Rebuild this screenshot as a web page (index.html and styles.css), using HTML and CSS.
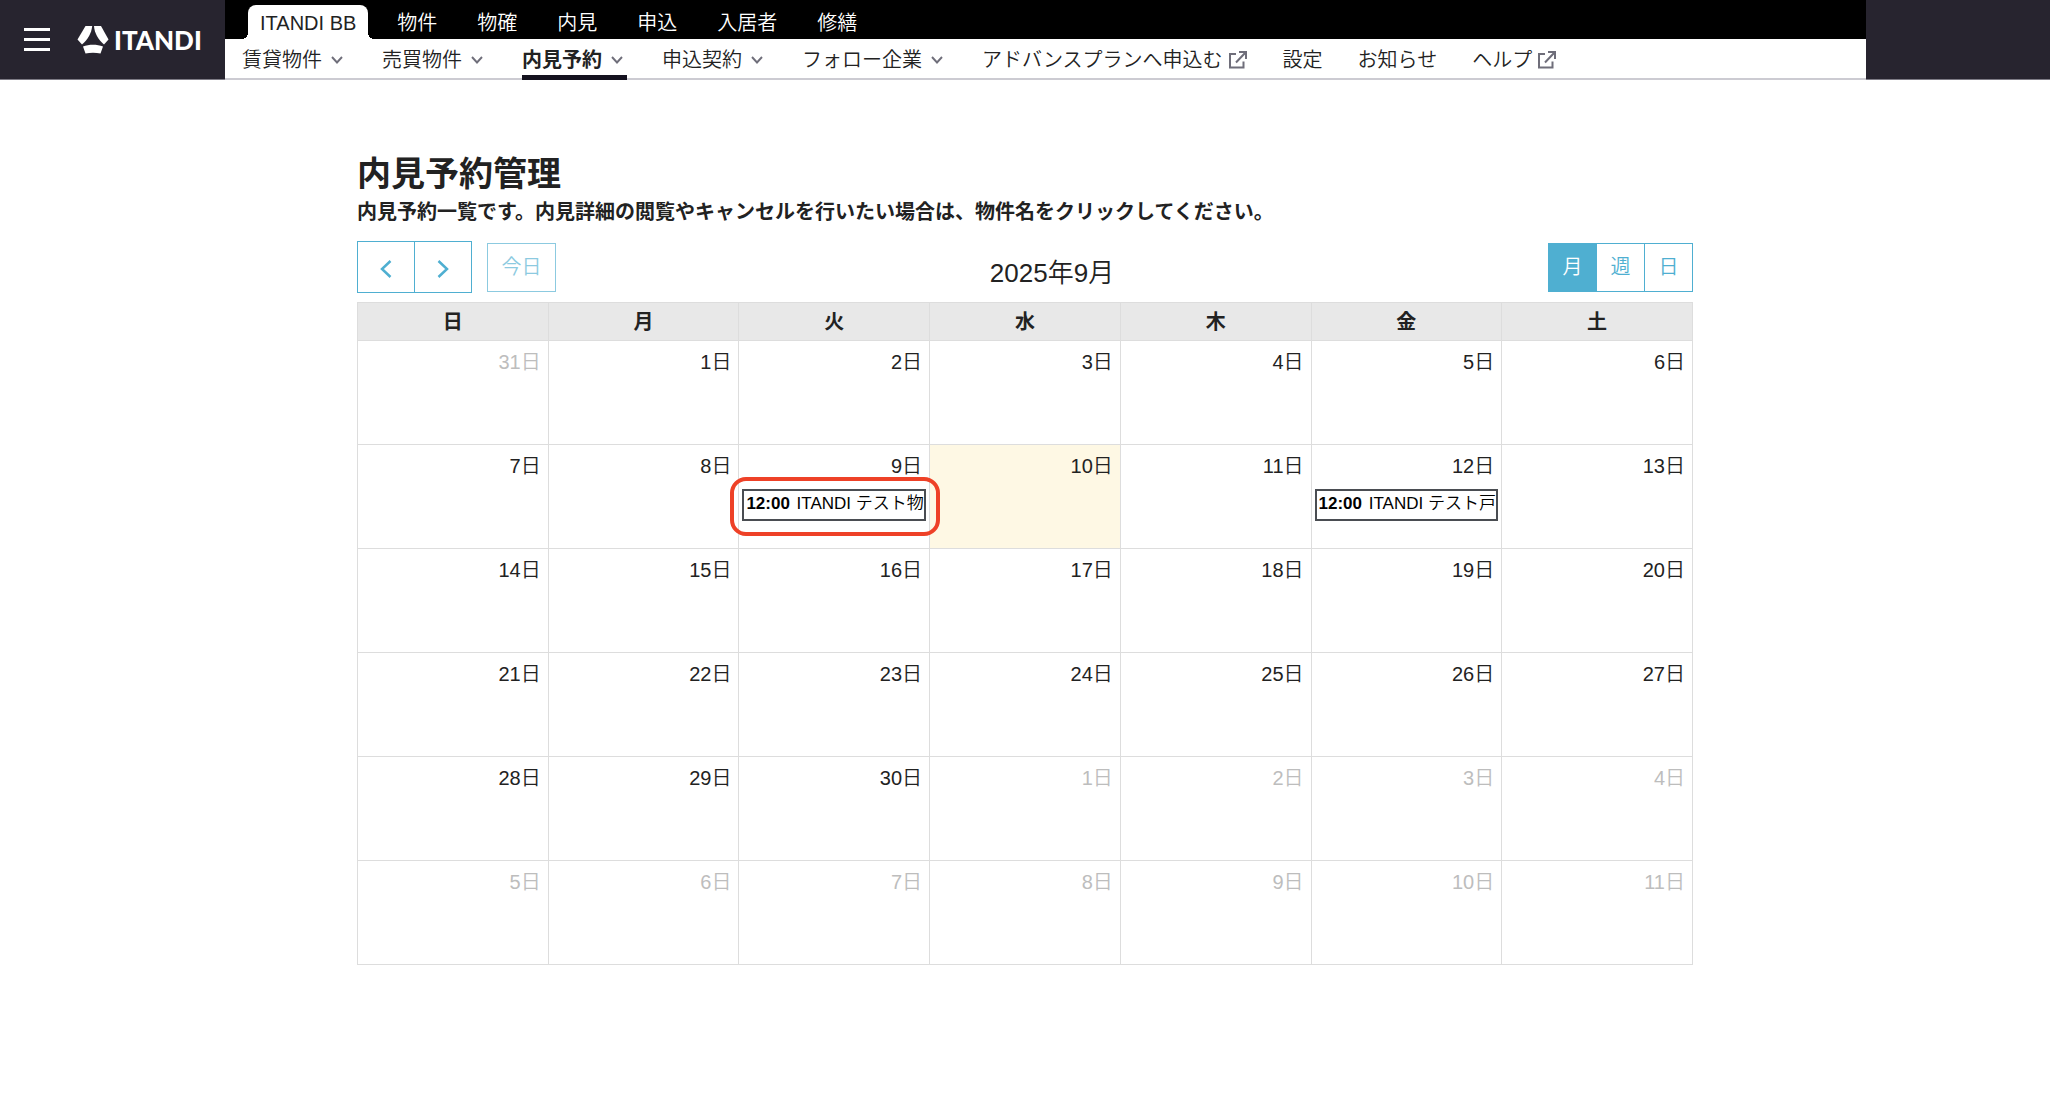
FILE: index.html
```html
<!DOCTYPE html>
<html lang="ja">
<head>
    <meta charset="UTF-8">
    <meta name="viewport" content="width=device-width, initial-scale=1.0">
    <title>内見予約管理 | ITANDI BB</title>
    <link rel="stylesheet" href="styles.css">
</head>
<body>
    <svg class="sprite" aria-hidden="true">
        <symbol id="chevron" viewBox="0 0 14 10">
            <path d="M2 2l5 5.500 5-5.500" fill="none" stroke="currentColor" stroke-width="1.900"/>
        </symbol>
        <symbol id="external" viewBox="0 0 20 20">
            <path d="M8 4H2v13.500h13.500v-6M11 2h7v7M17.500 2.500L8 12.500" fill="none" stroke="currentColor" stroke-width="2"/>
        </symbol>
    </svg>

    <header class="header">
        <div class="brand">
            <button class="menu-btn" type="button" aria-label="メニュー"><span></span><span></span><span></span></button>
            <a class="logo" href="#">
                <svg class="logo-mark" viewBox="0 0 32 28" aria-hidden="true">
                    <path d="M8.500 0H15.200C14.500 7 11 13.500 5 18.500L0.500 13.500z"/>
                    <path d="M17 0h7L31.500 13.500 27 18.500C21 13.500 17.500 7 17 0z"/>
                    <path d="M6 20.500C12 18 20 18 26 20.500L23.500 27.500C19 26.500 13 26.500 8.500 27.500z"/>
                </svg>
                <span>ITANDI</span>
            </a>
        </div>
        <div class="header-main">
            <nav class="service-nav">
                <a class="service-link active" href="#">ITANDI BB</a>
                <a class="service-link" href="#">物件</a>
                <a class="service-link" href="#">物確</a>
                <a class="service-link" href="#">内見</a>
                <a class="service-link" href="#">申込</a>
                <a class="service-link" href="#">入居者</a>
                <a class="service-link" href="#">修繕</a>
            </nav>
            <nav class="sub-nav">
                <a class="sub-link" href="#">賃貸物件<svg class="icon-chevron"><use href="#chevron"/></svg></a>
                <a class="sub-link" href="#">売買物件<svg class="icon-chevron"><use href="#chevron"/></svg></a>
                <a class="sub-link active" href="#">内見予約<svg class="icon-chevron"><use href="#chevron"/></svg></a>
                <a class="sub-link" href="#">申込契約<svg class="icon-chevron"><use href="#chevron"/></svg></a>
                <a class="sub-link" href="#">フォロー企業<svg class="icon-chevron"><use href="#chevron"/></svg></a>
                <a class="sub-link" href="#">アドバンスプランへ申込む<svg class="icon-external"><use href="#external"/></svg></a>
                <a class="sub-link" href="#">設定</a>
                <a class="sub-link" href="#">お知らせ</a>
                <a class="sub-link" href="#">ヘルプ<svg class="icon-external"><use href="#external"/></svg></a>
            </nav>
        </div>
        <div class="header-side"></div>
    </header>

    <main class="container">
        <h1>内見予約管理</h1>
        <p class="lead">内見予約一覧です。内見詳細の閲覧やキャンセルを行いたい場合は、物件名をクリックしてください。</p>

        <div class="toolbar">
            <div class="toolbar-left">
                <div class="btn-group">
                    <button class="btn btn-arrow" type="button" aria-label="前の月"><svg viewBox="0 0 12 20"><path d="M10.500 2L2 10l8.500 8"/></svg></button>
                    <button class="btn btn-arrow" type="button" aria-label="次の月"><svg viewBox="0 0 12 20"><path d="M1.500 2L10 10l-8.500 8"/></svg></button>
                </div>
                <button class="btn btn-today" type="button" disabled>今日</button>
            </div>
            <h2>2025年9月</h2>
            <div class="btn-group">
                <button class="btn active" type="button">月</button>
                <button class="btn" type="button">週</button>
                <button class="btn" type="button">日</button>
            </div>
        </div>

        <table class="calendar">
            <thead>
                <tr><th>日</th><th>月</th><th>火</th><th>水</th><th>木</th><th>金</th><th>土</th></tr>
            </thead>
            <tbody>
                <tr>
                    <td class="other">31日</td>
                    <td>1日</td>
                    <td>2日</td>
                    <td>3日</td>
                    <td>4日</td>
                    <td>5日</td>
                    <td>6日</td>
                </tr>
                <tr>
                    <td>7日</td>
                    <td>8日</td>
                    <td>9日
                        <div class="event-wrap marked"><a class="event" href="#"><b>12:00</b> ITANDI テスト物</a></div>
                    </td>
                    <td class="today">10日</td>
                    <td>11日</td>
                    <td>12日
                        <div class="event-wrap"><a class="event" href="#"><b>12:00</b> ITANDI テスト戸</a></div>
                    </td>
                    <td>13日</td>
                </tr>
                <tr>
                    <td>14日</td>
                    <td>15日</td>
                    <td>16日</td>
                    <td>17日</td>
                    <td>18日</td>
                    <td>19日</td>
                    <td>20日</td>
                </tr>
                <tr>
                    <td>21日</td>
                    <td>22日</td>
                    <td>23日</td>
                    <td>24日</td>
                    <td>25日</td>
                    <td>26日</td>
                    <td>27日</td>
                </tr>
                <tr>
                    <td>28日</td>
                    <td>29日</td>
                    <td>30日</td>
                    <td class="other">1日</td>
                    <td class="other">2日</td>
                    <td class="other">3日</td>
                    <td class="other">4日</td>
                </tr>
                <tr>
                    <td class="other">5日</td>
                    <td class="other">6日</td>
                    <td class="other">7日</td>
                    <td class="other">8日</td>
                    <td class="other">9日</td>
                    <td class="other">10日</td>
                    <td class="other">11日</td>
                </tr>
            </tbody>
        </table>
    </main>
</body>
</html>
```
FILE: styles.css
```css
* {
    margin: 0;
    padding: 0;
    box-sizing: border-box;
}

body {
    background: #fff;
    color: #222;
    font-family: "Liberation Sans", "Noto Sans CJK JP", sans-serif;
    font-size: 20px;
    font-weight: 350;
    line-height: 28px;
}

a {
    color: inherit;
    text-decoration: none;
}

button {
    font: inherit;
    cursor: pointer;
}

.sprite {
    display: none;
}

/* Header */
.header {
    display: flex;
    height: 80px;
    background: #27242f;
}

.brand {
    display: flex;
    align-items: center;
    gap: 27px;
    width: 225px;
    padding-left: 24px;
    border-bottom: 1px solid #7d7b85;
}

.menu-btn {
    display: flex;
    flex-direction: column;
    gap: 7px;
    width: 26px;
    background: none;
    border: none;
}

.menu-btn span {
    width: 100%;
    height: 3px;
    background: #fff;
}

.logo {
    display: flex;
    align-items: center;
    gap: 5px;
    color: #fff;
    font-family: Lato, sans-serif;
    font-size: 26px;
    font-weight: 900;
}

.logo-mark {
    width: 32px;
    height: 28px;
    fill: #fff;
}

.header-main {
    flex: 1;
    background: #fff;
    border-bottom: 2px solid #cccbd2;
}

.header-side {
    width: 184px;
    border-bottom: 1px solid #7d7b85;
}

.service-nav {
    display: flex;
    align-items: flex-end;
    gap: 40px;
    height: 39px;
    padding-left: 35px;
    background: #000;
    color: #fff;
}

.service-link {
    height: 34px;
    line-height: 36px;
}

.service-link.active {
    position: relative;
    margin: 0 -11px 0 -12px;
    padding: 0 12px;
    background: #fff;
    border-radius: 8px 8px 0 0;
    color: #222;
}

/* flared feet of the selected tab */
.service-link.active::before,
.service-link.active::after {
    content: '';
    position: absolute;
    bottom: 0;
    width: 6px;
    height: 6px;
}

.service-link.active::before {
    right: 100%;
    background: radial-gradient(circle at 0 0, transparent 6px, #fff 6px);
}

.service-link.active::after {
    left: 100%;
    background: radial-gradient(circle at 100% 0, transparent 6px, #fff 6px);
}

.sub-nav {
    display: flex;
    gap: 35px;
    height: 41px;
    padding-left: 17px;
}

.sub-link {
    display: flex;
    align-items: center;
    gap: 5px;
    white-space: nowrap;
}

.sub-link.active {
    border-bottom: 5px solid #14121f;
    padding-top: 5px;
    font-weight: bold;
}

.icon-chevron,
.icon-external {
    width: 20px;
    height: 20px;
    color: #6f6e7a;
}

.icon-chevron {
    height: 10px;
}

/* Page */
.container {
    width: 66%;
    max-width: 1336px;
    margin: 0 auto;
    padding-top: 70px;
}

h1 {
    font-size: 34px;
    font-weight: bold;
    line-height: 48px;
}

.lead {
    font-weight: bold;
}

.toolbar {
    display: flex;
    justify-content: space-between;
    align-items: center;
    margin: 15px 0 9px;
}

.toolbar-left {
    display: flex;
    align-items: center;
    gap: 15px;
}

.toolbar h2 {
    padding-top: 12px;
    font-size: 26px;
    font-weight: 350;
}

.btn-group {
    display: flex;
}

.btn {
    width: 49px;
    height: 49px;
    background: #fff;
    border: 1px solid #4fafd1;
    color: #4fafd1;
}

.btn + .btn {
    margin-left: -1px;
}

.btn.active {
    background: #4fafd1;
    color: #fff;
}

.btn-arrow {
    width: 58px;
    height: 52px;
}

.btn-arrow svg {
    width: 12px;
    height: 20px;
    vertical-align: middle;
    fill: none;
    stroke: currentColor;
    stroke-width: 2.500;
}

.btn-today {
    width: 69px;
    opacity: 0.65;
}

/* Calendar */
.calendar {
    width: 100%;
    border-collapse: collapse;
    table-layout: fixed;
}

.calendar th,
.calendar td {
    border: 1px solid #ddd;
}

.calendar th {
    height: 38px;
    background: #e8e8e8;
    font-weight: bold;
}

.calendar td {
    height: 104px;
    padding: 7px 7px 0;
    text-align: right;
    vertical-align: top;
}

.calendar .today {
    background: #fef8e4;
}

.calendar .other {
    color: #bdbdbd;
}

.event-wrap {
    position: relative;
    margin: 9px -4px 0;
}

.event {
    display: block;
    height: 32px;
    padding-left: 2px;
    overflow: hidden;
    border: 2px solid #4a4d52;
    color: #000;
    font-size: 17px;
    line-height: 26px;
    text-align: left;
    white-space: nowrap;
}

.event b {
    margin-right: 2px;
    font-weight: bold;
}

.marked::after {
    content: '';
    position: absolute;
    inset: -12px -14px -15px -12px;
    border: 4px solid #ee4127;
    border-radius: 16px;
    pointer-events: none;
}
```
